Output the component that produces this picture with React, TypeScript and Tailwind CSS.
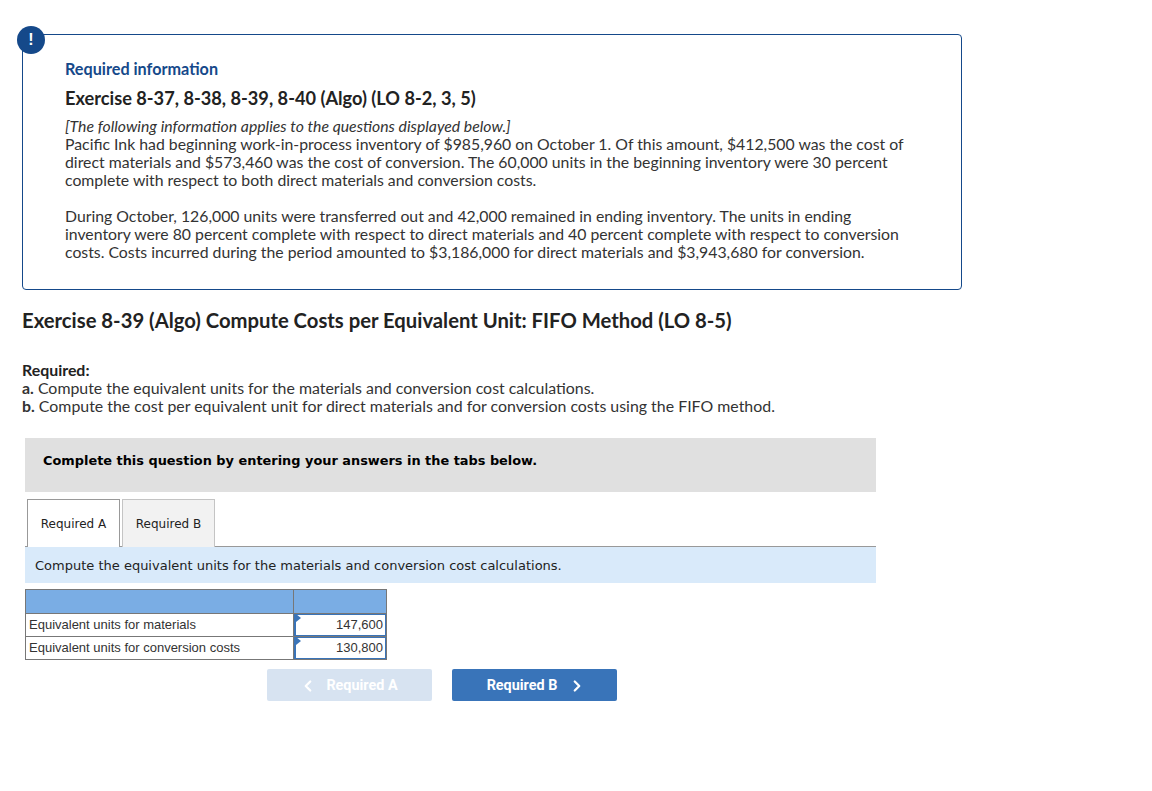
import { ChevronLeft, ChevronRight } from "lucide-react";

const rows = [
  { label: "Equivalent units for materials", value: "147,600" },
  { label: "Equivalent units for conversion costs", value: "130,800" },
];

const App = () => {
  return (
    <div className="w-[1152px] h-[791px] bg-white overflow-hidden pt-[34px] pl-[22px] font-['Lato','Open_Sans',sans-serif] text-[#333333]">
      <div className="relative w-[940px] h-[256px] border border-[#15498a] rounded-[4px] pt-[25px] pl-[42px]">
        <div className="absolute left-[-6px] top-[-9px] w-[28px] h-[28px] rounded-full bg-[#15498a] text-white flex items-center justify-center font-['Liberation_Sans',sans-serif] font-bold text-[16px]">
          !
        </div>
        <div className="text-[16.2px] leading-[18px] font-bold text-[#15498a]">Required information</div>
        <div className="mt-[10px] text-[18.2px] leading-[20px] font-bold text-[#222222]">
          Exercise 8-37, 8-38, 8-39, 8-40 (Algo) (LO 8-2, 3, 5)
        </div>
        <div className="mt-[9px] text-[15.8px] leading-[18px] w-[850px]">
          <div className="italic">[The following information applies to the questions displayed below.]</div>
          <div>
            Pacific Ink had beginning work-in-process inventory of $985,960 on October 1. Of this amount, $412,500 was the cost of
            direct materials and $573,460 was the cost of conversion. The 60,000 units in the beginning inventory were 30 percent
            complete with respect to both direct materials and conversion costs.
          </div>
          <div className="mt-[18px]">
            During October, 126,000 units were transferred out and 42,000 remained in ending inventory. The units in ending
            inventory were 80 percent complete with respect to direct materials and 40 percent complete with respect to conversion
            costs. Costs incurred during the period amounted to $3,186,000 for direct materials and $3,943,680 for conversion.
          </div>
        </div>
      </div>

      <h2 className="mt-[18px] text-[20.25px] leading-[24px] font-bold text-[#222222]">
        Exercise 8-39 (Algo) Compute Costs per Equivalent Unit: FIFO Method (LO 8-5)
      </h2>

      <div className="mt-[29px] text-[15.9px] leading-[18px]">
        <div className="font-bold text-[#222222]">Required:</div>
        <div><b>a.</b> Compute the equivalent units for the materials and conversion cost calculations.</div>
        <div><b>b.</b> Compute the cost per equivalent unit for direct materials and for conversion costs using the FIFO method.</div>
      </div>

      <div className="ml-[3px] w-[851px] font-['DejaVu_Sans',sans-serif]">
        <div className="mt-[23px] h-[54px] bg-[#e0e0e0] pl-[18px] pt-[14px] text-[12.9px] leading-[17px] font-bold text-black">
          Complete this question by entering your answers in the tabs below.
        </div>

        <div className="mt-[7px] flex gap-[2px] pl-[2px] text-[12px] text-[#222222]">
          <div className="w-[93px] h-[48px] border border-b-0 border-[#999999] bg-white flex items-center justify-center">Required A</div>
          <div className="w-[93px] h-[48px] border border-b-0 border-[#c4c4c4] bg-[#f2f2f2] flex items-center justify-center">Required B</div>
        </div>

        <div className="border-t border-[#999999] -mt-px h-[37px] bg-[#d9eafa] pl-[10px] pt-[2px] flex items-center text-[13px] text-[#222222]">
          Compute the equivalent units for the materials and conversion cost calculations.
        </div>

        <div className="mt-[6px] w-[362px] border border-[#777777] font-['Liberation_Sans',sans-serif] text-[13px] text-[#333333]">
          <div className="flex h-[23px] bg-[#7aade4]">
            <div className="w-[268px] border-r border-[#777777]" />
          </div>
          {rows.map((row) => (
            <div key={row.label} className="flex h-[23px] border-t border-[#777777]">
              <div className="w-[268px] pl-[3px] border-r border-[#777777] flex items-center">{row.label}</div>
              <div className="relative flex-1 border border-l-2 border-[#3a74b8] flex items-center justify-end pr-[2px]">
                <div className="absolute left-0 top-[-1px] w-0 h-0 border-y-[4px] border-y-transparent border-l-[5px] border-l-[#3a74b8]" />
                {row.value}
              </div>
            </div>
          ))}
        </div>

        <div className="mt-[9px] ml-[242px] flex gap-[20px] font-['Roboto',sans-serif] font-bold text-[14.4px] text-white">
          <div className="w-[165px] h-[32px] rounded-[2px] bg-[#d7e3f1] pr-[2px] pt-[2px] flex items-center justify-center gap-[9px]">
            <ChevronLeft size={18} strokeWidth={3} />
            <span>Required A</span>
          </div>
          <div className="w-[165px] h-[32px] rounded-[2px] bg-[#3974b9] pl-[4px] pt-[2px] flex items-center justify-center gap-[11px]">
            <span>Required B</span>
            <ChevronRight size={18} strokeWidth={3} />
          </div>
        </div>
      </div>
    </div>
  );
};
export default App;
